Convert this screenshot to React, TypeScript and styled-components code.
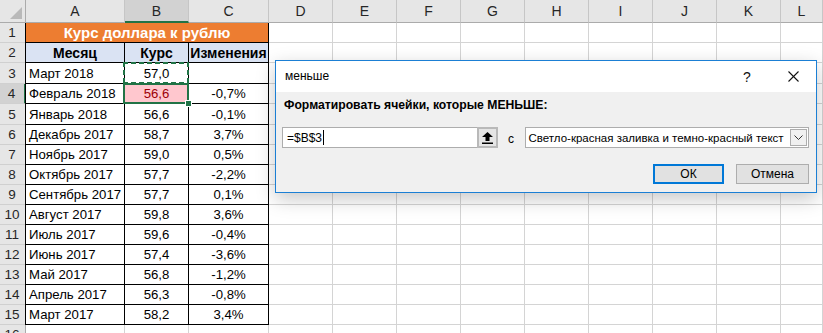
import React from "react";
import styled, { createGlobalStyle, css } from "styled-components";

const GlobalStyle = createGlobalStyle`
  html, body { margin: 0; padding: 0; background: #ffffff; overflow: hidden; }
  body { font-family: "Liberation Sans", Arial, sans-serif; }
`;

const GREEN = "#217346";
const COL_WIDTHS = [26, 99, 64, 80, 64, 64, 64, 64, 64, 64, 64, 64];
const COL_NAMES = ["A", "B", "C", "D", "E", "F", "G", "H", "I", "J", "K", "L"];
const ROW_HEIGHTS = [20, 20, 21, 20, 21, 20, 20, 20, 20, 20, 20, 20, 20, 20, 20, 20];

type Row = [string, string, string];
const DATA: Row[] = [
  ["Март 2018", "57,0", ""],
  ["Февраль 2018", "56,6", "-0,7%"],
  ["Январь 2018", "56,6", "-0,1%"],
  ["Декабрь 2017", "58,7", "3,7%"],
  ["Ноябрь 2017", "59,0", "0,5%"],
  ["Октябрь 2017", "57,7", "-2,2%"],
  ["Сентябрь 2017", "57,7", "0,1%"],
  ["Август 2017", "59,8", "3,6%"],
  ["Июль 2017", "59,6", "-0,4%"],
  ["Июнь 2017", "57,4", "-3,6%"],
  ["Май 2017", "56,8", "-1,2%"],
  ["Апрель 2017", "56,3", "-0,8%"],
  ["Март 2017", "58,2", "3,4%"],
];

const Stage = styled.div`
  position: relative;
  width: 823px;
  height: 333px;
  overflow: hidden;
`;

const Sheet = styled.div`
  display: grid;
  grid-template-columns: ${COL_WIDTHS.map((w) => w + "px").join(" ")} 1fr;
  grid-template-rows: 23px ${ROW_HEIGHTS.map((h) => h + "px").join(" ")};
  font-size: 13px;
  color: #000;
`;

const Corner = styled.div`
  position: relative;
  background: #e6e6e6;
  border-right: 1px solid #ababab;
  border-bottom: 1px solid #ababab;
  box-sizing: border-box;
  &::after {
    content: "";
    position: absolute;
    right: 3px;
    bottom: 3px;
    width: 0;
    height: 0;
    border-left: 12px solid transparent;
    border-bottom: 12px solid #b9b9b9;
  }
`;

const ColHeader = styled.div<{ $selected?: boolean }>`
  box-sizing: border-box;
  background: ${(p) => (p.$selected ? "#d2d2d2" : "#e6e6e6")};
  border-right: 1px solid #c6c6c6;
  border-bottom: ${(p) => (p.$selected ? `2px solid ${GREEN}` : "1px solid #ababab")};
  display: flex;
  align-items: center;
  justify-content: center;
  padding-top: ${(p) => (p.$selected ? "1px" : "0")};
  color: #262626;
  font-size: 14px;
`;

const RowHeader = styled.div<{ $selected?: boolean }>`
  box-sizing: border-box;
  background: ${(p) => (p.$selected ? "#d2d2d2" : "#e6e6e6")};
  border-bottom: 1px solid #d0d0d0;
  border-right: ${(p) => (p.$selected ? `2px solid ${GREEN}` : "1px solid #ababab")};
  display: flex;
  align-items: center;
  justify-content: center;
  color: #262626;
  font-size: 13.5px;
  padding-right: 1px;
`;

const Cell = styled.div<{
  $table?: boolean;
  $first?: boolean;
  $align?: "left" | "center";
  $bold?: boolean;
  $size?: number;
  $fill?: string;
  $color?: string;
  $span?: number;
}>`
  position: relative;
  box-sizing: border-box;
  display: flex;
  align-items: center;
  padding: 0 3px;
  white-space: nowrap;
  overflow: visible;
  justify-content: ${(p) => (p.$align === "center" ? "center" : "flex-start")};
  font-weight: ${(p) => (p.$bold ? 700 : 400)};
  font-size: ${(p) => (p.$size ? p.$size + "px" : "13.2px")};
  background: ${(p) => p.$fill || "transparent"};
  color: ${(p) => p.$color || "#000"};
  ${(p) => (p.$span ? `grid-column: span ${p.$span};` : "")}
  ${(p) =>
    p.$table
      ? css`
          border-right: 1px solid #000;
          border-bottom: 1px solid #000;
        `
      : css`
          border-right: 1px solid #d4d4d4;
          border-bottom: 1px solid #d4d4d4;
        `}
  ${(p) => (p.$first ? "box-shadow: -1px 0 0 #000;" : "")}
`;

const DASH_H = `repeating-linear-gradient(90deg, ${GREEN} 0 5px, transparent 5px 8px)`;
const DASH_V = `repeating-linear-gradient(180deg, ${GREEN} 0 5px, transparent 5px 8px)`;

const CopyCell = styled(Cell)`
  &::after {
    content: "";
    position: absolute;
    left: -2px;
    top: -1px;
    right: -1px;
    bottom: -1px;
    background-image: ${DASH_H}, ${DASH_H}, ${DASH_V}, ${DASH_V};
    background-size: 100% 2px, 100% 2px, 2px 100%, 2px 100%;
    background-position: 0 0, 0 100%, 0 0, 100% 0;
    background-repeat: no-repeat;
    pointer-events: none;
    z-index: 2;
  }
`;

const ActiveCell = styled(Cell)`
  &::after {
    content: "";
    position: absolute;
    left: -2px;
    top: -1px;
    right: -1px;
    bottom: -1px;
    border: 2px solid ${GREEN};
    z-index: 3;
  }
  &::before {
    content: "";
    position: absolute;
    right: -4px;
    bottom: -4px;
    width: 5px;
    height: 5px;
    background: ${GREEN};
    border: 1px solid #fff;
    z-index: 4;
  }
`;

/* ---------- Dialog ---------- */

const Dialog = styled.div`
  position: absolute;
  left: 275px;
  top: 60px;
  width: 542px;
  height: 133px;
  box-sizing: border-box;
  border: 1px solid #1b7fd4;
  background: #f0f0f0;
  box-shadow: 0 6px 18px rgba(0, 0, 0, 0.22);
  display: flex;
  flex-direction: column;
  font-family: "Liberation Sans", Arial, sans-serif;
  font-size: 11.5px;
  color: #000;
  z-index: 10;
`;

const TitleBar = styled.div`
  height: 31px;
  flex: none;
  background: #ffffff;
  display: flex;
  align-items: center;
  padding: 0 0 0 9px;
`;

const Title = styled.div`
  flex: 1;
  font-size: 12px;
  padding-bottom: 1px;
`;

const TitleButton = styled.div`
  width: 46px;
  display: flex;
  justify-content: center;
  align-items: center;
  font-size: 14px;
  color: #111;
`;

const Body = styled.div`
  flex: 1;
  display: flex;
  flex-direction: column;
  padding: 6px 7px 0 6px;
`;

const Label = styled.div`
  font-weight: 700;
  font-size: 12.2px;
  padding-left: 2px;
  height: 14px;
  line-height: 14px;
`;

const InputRow = styled.div`
  display: flex;
  align-items: center;
  margin-top: 15px;
  height: 21px;
`;

const RefInput = styled.div`
  width: 195px;
  height: 21px;
  box-sizing: border-box;
  background: #fff;
  border: 1px solid #adadad;
  border-right: none;
  display: flex;
  align-items: center;
  padding-left: 4px;
  font-size: 12px;
`;

const Caret = styled.span`
  display: inline-block;
  width: 1px;
  height: 15px;
  background: #000;
  margin-left: 1px;
`;

const RefButton = styled.div`
  width: 21px;
  height: 21px;
  box-sizing: border-box;
  background: #e5e5e5;
  border: 2px solid #b9b9b9;
  display: flex;
  align-items: center;
  justify-content: center;
`;

const WithLabel = styled.div`
  width: 27px;
  text-align: center;
  font-size: 12px;
  padding-top: 2px;
`;

const Select = styled.div`
  width: 285px;
  height: 21px;
  box-sizing: border-box;
  background: #fff;
  border: 1px solid #adadad;
  display: flex;
  align-items: center;
`;

const SelectText = styled.div`
  flex: 1;
  padding-left: 3px;
  font-size: 11.5px;
  white-space: nowrap;
  overflow: hidden;
`;

const SelectArrow = styled.div`
  width: 17px;
  height: 17px;
  margin-right: 1px;
  box-sizing: border-box;
  border: 1px solid #adadad;
  background: #f0f0f0;
  display: flex;
  align-items: center;
  justify-content: center;
`;

const ButtonRow = styled.div`
  display: flex;
  justify-content: flex-end;
  gap: 12px;
  margin-top: 16px;
`;

const Button = styled.div<{ $default?: boolean }>`
  width: ${(p) => (p.$default ? "71px" : "73px")};
  height: 20px;
  box-sizing: border-box;
  background: #e1e1e1;
  border: ${(p) => (p.$default ? "2px solid #0078d7" : "1px solid #adadad")};
  display: flex;
  align-items: center;
  justify-content: center;
  font-size: 12px;
`;

const UpArrowIcon = () => (
  <svg width="11" height="12" viewBox="0 0 11 12">
    <polygon points="5.5,0 11,5 7.5,5 7.5,9 3.5,9 3.5,5 0,5" fill="#000" />
    <rect x="0" y="10.5" width="11" height="1.5" fill="#000" />
  </svg>
);

const ChevronDown = () => (
  <svg width="9" height="6" viewBox="0 0 9 6">
    <polyline points="0.5,0.5 4.5,4.5 8.5,0.5" fill="none" stroke="#333" strokeWidth="1" />
  </svg>
);

const CloseIcon = () => (
  <svg width="11" height="11" viewBox="0 0 11 11">
    <line x1="0.5" y1="0.5" x2="10.5" y2="10.5" stroke="#111" strokeWidth="1.1" />
    <line x1="10.5" y1="0.5" x2="0.5" y2="10.5" stroke="#111" strokeWidth="1.1" />
  </svg>
);

const EMPTY_COLS = COL_NAMES.length - 3; // D..L

export default function App() {
  const rows: React.ReactNode[] = [];

  rows.push(<Corner key="corner" />);
  COL_NAMES.forEach((n) =>
    rows.push(
      <ColHeader key={"h" + n} $selected={n === "B"}>
        {n}
      </ColHeader>
    )
  );

  const emptyCells = (r: number) =>
    Array.from({ length: EMPTY_COLS }, (_, i) => <Cell key={`e${r}-${i}`} />);

  rows.push(<RowHeader key="r1">1</RowHeader>);
  rows.push(
    <Cell key="title" $table $first $span={3} $align="center" $bold $size={15} $fill="#ed7d31" $color="#ffffff">
      Курс доллара к рублю
    </Cell>
  );
  rows.push(...emptyCells(1));

  rows.push(<RowHeader key="r2">2</RowHeader>);
  ["Месяц", "Курс", "Изменения"].forEach((t, i) =>
    rows.push(
      <Cell key={"hd" + i} $table $first={i === 0} $align="center" $bold $size={14} $fill="#dae3f3">
        {t}
      </Cell>
    )
  );
  rows.push(...emptyCells(2));

  DATA.forEach((d, idx) => {
    const r = idx + 3;
    rows.push(
      <RowHeader key={"r" + r} $selected={r === 4}>
        {r}
      </RowHeader>
    );
    rows.push(
      <Cell key={`a${r}`} $table $first>
        {d[0]}
      </Cell>
    );
    if (r === 3) {
      rows.push(
        <CopyCell key={`b${r}`} $table $align="center">
          {d[1]}
        </CopyCell>
      );
    } else if (r === 4) {
      rows.push(
        <ActiveCell key={`b${r}`} $table $align="center" $fill="#ffc7ce" $color="#9c0006">
          {d[1]}
        </ActiveCell>
      );
    } else {
      rows.push(
        <Cell key={`b${r}`} $table $align="center">
          {d[1]}
        </Cell>
      );
    }
    rows.push(
      <Cell key={`c${r}`} $table $align="center">
        {d[2]}
      </Cell>
    );
    rows.push(...emptyCells(r));
  });

  rows.push(<RowHeader key="r16">16</RowHeader>);
  rows.push(<Cell key="a16" />, <Cell key="b16" />, <Cell key="c16" />);
  rows.push(...emptyCells(16));

  return (
    <>
      <GlobalStyle />
      <Stage>
        <Sheet>{rows}</Sheet>
        <Dialog>
          <TitleBar>
            <Title>меньше</Title>
            <TitleButton>?</TitleButton>
            <TitleButton>
              <CloseIcon />
            </TitleButton>
          </TitleBar>
          <Body>
            <Label>Форматировать ячейки, которые МЕНЬШЕ:</Label>
            <InputRow>
              <RefInput>
                =$B$3
                <Caret />
              </RefInput>
              <RefButton>
                <UpArrowIcon />
              </RefButton>
              <WithLabel>с</WithLabel>
              <Select>
                <SelectText>Светло-красная заливка и темно-красный текст</SelectText>
                <SelectArrow>
                  <ChevronDown />
                </SelectArrow>
              </Select>
            </InputRow>
            <ButtonRow>
              <Button $default>ОК</Button>
              <Button>Отмена</Button>
            </ButtonRow>
          </Body>
        </Dialog>
      </Stage>
    </>
  );
}
